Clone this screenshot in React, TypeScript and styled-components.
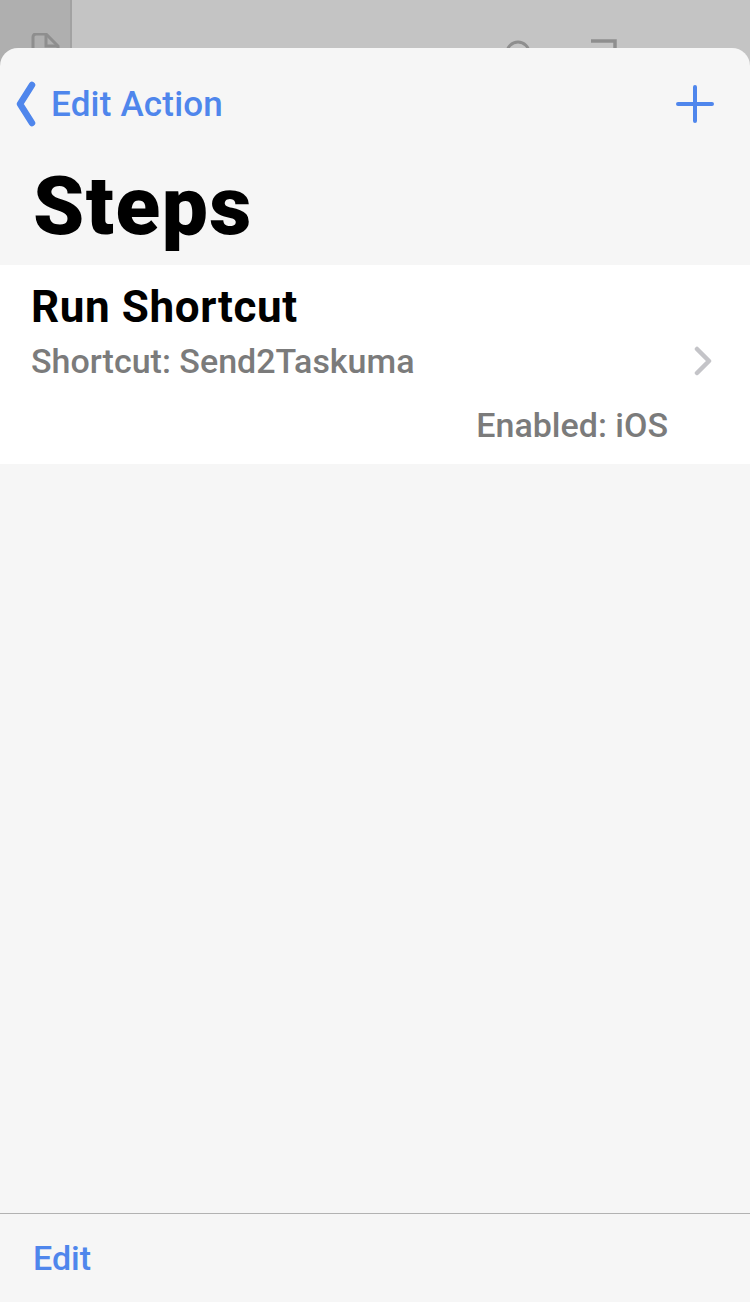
import styled, { createGlobalStyle } from "styled-components";

const GlobalStyle = createGlobalStyle`
  html, body {
    margin: 0;
    padding: 0;
    width: 750px;
    height: 1302px;
    overflow: hidden;
  }
  body {
    font-family: Roboto, "Liberation Sans", Arial, sans-serif;
    -webkit-font-smoothing: antialiased;
  }
`;

const BLUE = "#4f86ec";

const Screen = styled.div`
  width: 750px;
  height: 1302px;
  display: flex;
  flex-direction: column;
  background: linear-gradient(
    to right,
    #afafaf 0 70px,
    #a2a2a2 70px 72px,
    #c4c4c4 72px
  );
`;

const Backdrop = styled.div`
  position: relative;
  height: 48px;
  flex-shrink: 0;
  overflow: hidden;
`;

const BackdropIcon = styled.svg<{ $left: number; $top: number }>`
  position: absolute;
  left: ${(p) => p.$left}px;
  top: ${(p) => p.$top}px;
`;

const Sheet = styled.div`
  flex: 1;
  display: flex;
  flex-direction: column;
  background: #f6f6f6;
  border-radius: 18px 18px 0 0;
  overflow: hidden;
`;

const NavBar = styled.div`
  height: 112px;
  display: flex;
  align-items: center;
  justify-content: space-between;
  padding: 0 36px 0 15px;
`;

const BackButton = styled.button`
  display: flex;
  align-items: center;
  gap: 14px;
  background: transparent;
  border: none;
  padding: 0;
  color: ${BLUE};
  font-family: inherit;
  font-size: 35px;
  font-weight: 500;
  letter-spacing: 0.2px;
  cursor: pointer;
`;

const IconButton = styled.button`
  background: transparent;
  border: none;
  padding: 0;
  display: flex;
  cursor: pointer;
`;

const Title = styled.h1`
  margin: 6px 0 19px;
  padding-left: 33px;
  font-size: 82px;
  line-height: 80px;
  font-weight: 900;
  letter-spacing: 1.5px;
  color: #000;
`;

const Card = styled.div`
  background: #fff;
  padding: 17px 37px 19px 31px;
  display: flex;
  flex-direction: column;
`;

const StepTitle = styled.div`
  font-size: 44px;
  line-height: 50px;
  font-weight: 700;
  letter-spacing: 0.6px;
  color: #000;
`;

const DetailRow = styled.div`
  margin-top: 9px;
  display: flex;
  align-items: center;
  justify-content: space-between;
`;

const Detail = styled.div<{ $right?: boolean }>`
  font-size: 34px;
  line-height: 40px;
  font-weight: 500;
  color: #7b7b7b;
  text-align: ${(p) => (p.$right ? "right" : "left")};
  margin-top: ${(p) => (p.$right ? "24px" : "0")};
  margin-right: ${(p) => (p.$right ? "45px" : "0")};
`;

const Spacer = styled.div`
  flex: 1;
`;

const Toolbar = styled.div`
  height: 88px;
  border-top: 1px solid #b2b2b2;
  display: flex;
  align-items: center;
  padding-left: 33px;
`;

const ToolbarButton = styled.button`
  background: transparent;
  border: none;
  padding: 0;
  color: ${BLUE};
  font-family: inherit;
  font-size: 34px;
  font-weight: 500;
  cursor: pointer;
`;

export default function App() {
  return (
    <>
      <GlobalStyle />
      <Screen>
        <Backdrop>
          <BackdropIcon $left={31} $top={33} width="30" height="30" viewBox="0 0 30 30">
            <path d="M2 28 V4 a3 3 0 0 1 3 -3 H15 L27 13 V28" fill="none" stroke="#8e8e8e" strokeWidth="3" />
            <path d="M15 2 V13 H26" fill="none" stroke="#8e8e8e" strokeWidth="3" />
          </BackdropIcon>
          <BackdropIcon $left={505} $top={39} width="30" height="30" viewBox="0 0 30 30">
            <circle cx="13" cy="14" r="11" fill="none" stroke="#8e8e8e" strokeWidth="3" />
          </BackdropIcon>
          <BackdropIcon $left={590} $top={39} width="30" height="30" viewBox="0 0 30 30">
            <path d="M1 2 H25 V28" fill="none" stroke="#8e8e8e" strokeWidth="3.5" />
          </BackdropIcon>
        </Backdrop>
        <Sheet>
          <NavBar>
            <BackButton>
              <svg width="22" height="46" viewBox="0 0 22 46">
                <path d="M17 4 L5 23 L17 42" fill="none" stroke={BLUE} strokeWidth="6.5" strokeLinecap="round" strokeLinejoin="round" />
              </svg>
              Edit Action
            </BackButton>
            <IconButton aria-label="Add">
              <svg width="38" height="38" viewBox="0 0 38 38">
                <path d="M19 2 V36 M2 19 H36" fill="none" stroke={BLUE} strokeWidth="4" strokeLinecap="round" />
              </svg>
            </IconButton>
          </NavBar>
          <Title>Steps</Title>
          <Card>
            <StepTitle>Run Shortcut</StepTitle>
            <DetailRow>
              <Detail>Shortcut: Send2Taskuma</Detail>
              <svg width="20" height="30" viewBox="0 0 20 30">
                <path d="M4 3 L16 15 L4 27" fill="none" stroke="#c4c4c8" strokeWidth="4.5" strokeLinecap="round" strokeLinejoin="round" />
              </svg>
            </DetailRow>
            <Detail $right>Enabled: iOS</Detail>
          </Card>
          <Spacer />
          <Toolbar>
            <ToolbarButton>Edit</ToolbarButton>
          </Toolbar>
        </Sheet>
      </Screen>
    </>
  );
}
